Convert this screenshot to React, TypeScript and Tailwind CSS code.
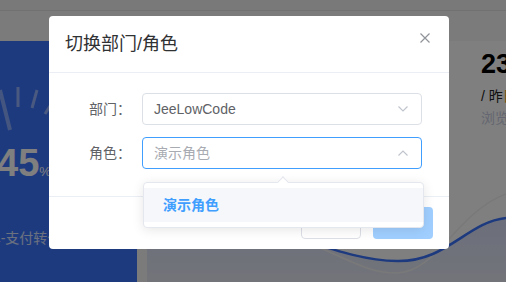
const ChevronDown = () => (
  <svg width="10" height="6" viewBox="0 0 10 6" fill="none">
    <path d="M0.5 0.5 L5 5 L9.5 0.5" stroke="#c0c4cc" strokeWidth="1.2" />
  </svg>
);

const ChevronUp = () => (
  <svg width="10" height="6" viewBox="0 0 10 6" fill="none">
    <path d="M0.5 5.5 L5 1 L9.5 5.5" stroke="#c0c4cc" strokeWidth="1.2" />
  </svg>
);

const App = () => {
  return (
    <div className="relative h-[282px] w-[506px] overflow-hidden bg-[#f6f6f6] font-['Liberation_Sans','Noto_Sans_CJK_SC',sans-serif]">
      {/* page behind the mask */}
      <div className="h-[11px] border-b border-[#e2e2e2] bg-[#f2f2f2]" />
      <div className="flex h-[271px] gap-[10px] pt-[30px]">
        <div className="-ml-[89px] flex w-[226px] shrink-0 flex-col items-center bg-[#3a74ff]">
          <svg width="226" height="100" viewBox="0 0 226 100">
            <line x1="89" y1="49" x2="99" y2="89" stroke="white" strokeOpacity="0.4" strokeWidth="4" />
            <line x1="107" y1="46" x2="107" y2="66" stroke="white" strokeOpacity="0.45" strokeWidth="3" />
            <line x1="126" y1="49" x2="121" y2="67" stroke="white" strokeOpacity="0.45" strokeWidth="3" />
            <line x1="139" y1="65" x2="134" y2="73" stroke="white" strokeOpacity="0.45" strokeWidth="3" />
          </svg>
          <div className="mt-[2px] flex items-baseline text-white">
            <span className="text-[38px] font-bold leading-[40px]">45</span>
            <span className="text-[13px]">%</span>
          </div>
          <div className="mt-[45px] whitespace-nowrap text-[14px] text-white/80">下单-支付转化率</div>
        </div>
        <div className="flex flex-1 flex-col bg-white">
          <div className="whitespace-nowrap pl-[334px] pt-[8px]">
            <div className="text-[27px] font-bold leading-[30px] text-black">23</div>
            <div className="mt-[8px] text-[14px] leading-[18px] text-[#222]">
              / 昨<span className="text-[#f5a623]">日</span>
            </div>
            <div className="mt-[4px] text-[14px] leading-[18px] text-[#c8cde2]">浏览</div>
          </div>
          <svg className="mt-auto" width="359" height="100" viewBox="0 0 359 100">
            <defs>
              <linearGradient id="area" x1="0" y1="0" x2="0" y2="1">
                <stop offset="0" stopColor="#d6ddf8" />
                <stop offset="1" stopColor="#e6e9f4" />
              </linearGradient>
            </defs>
            <path d="M0 30 C120 30 180 78 250 79 C300 80 320 40 359 36 L359 100 L0 100 Z" fill="url(#area)" />
            <path d="M100 40 C180 60 210 92 250 91 C290 90 310 30 359 12" fill="none" stroke="#f2f2f2" strokeWidth="1.5" />
            <path d="M0 30 C120 30 180 78 250 79 C300 80 320 40 359 36" fill="none" stroke="#3a74ff" strokeWidth="2.5" />
          </svg>
        </div>
      </div>

      {/* mask */}
      <div className="absolute inset-0 bg-black/50" />

      {/* dialog */}
      <div className="absolute left-[49px] top-[16px] flex h-[233px] w-[400px] flex-col rounded-[4px] bg-white">
        <div className="flex h-[57px] shrink-0 items-center justify-between border-b border-[#ebeef5] pl-4 pr-[19px]">
          <span className="text-[18px] leading-[24px] text-[#303133]">切换部门/角色</span>
          <svg className="mb-[13px]" width="10" height="10" viewBox="0 0 10 10">
            <path d="M0.5 0.5 L9.5 9.5 M9.5 0.5 L0.5 9.5" stroke="#909399" strokeWidth="1.2" />
          </svg>
        </div>

        <div className="pb-[27px] pt-[20px]">
          <div className="flex items-center">
            <div className="w-[93px] pr-[11px] text-right text-[14px] text-[#606266]">部门：</div>
            <div className="flex h-[32px] w-[280px] items-center justify-between rounded-[4px] border border-[#dcdfe6] pl-[11px] pr-[13px]">
              <span className="text-[14px] text-[#606266]">JeeLowCode</span>
              <ChevronDown />
            </div>
          </div>

          <div className="relative mt-[12px] flex items-center">
            <div className="w-[93px] pr-[11px] text-right text-[14px] text-[#606266]">角色：</div>
            <div className="flex h-[32px] w-[280px] items-center justify-between rounded-[4px] border border-[#409eff] pl-[11px] pr-[13px]">
              <span className="text-[14px] text-[#a8abb2]">演示角色</span>
              <ChevronUp />
            </div>

            <div className="absolute left-[94px] top-[45px] z-10 w-[281px] rounded-[4px] border border-[#e4e7ed] bg-white py-[5px] shadow-[0_2px_12px_0_rgba(0,0,0,0.1)]">
              <div className="absolute -top-[5px] left-[135px] h-[8px] w-[8px] rotate-45 border-l border-t border-[#e4e7ed] bg-white" />
              <div className="flex h-[34px] items-center bg-[#f5f7fa] pl-[19px] text-[14px] font-bold text-[#409eff]">
                演示角色
              </div>
            </div>
          </div>
        </div>

        <div className="flex justify-end gap-[12px] border-t border-[#ebeef5] pr-[16px] pt-[10px]">
          <button className="h-[32px] w-[60px] rounded-[4px] border border-[#dcdfe6] bg-white pb-[12px] text-[14px] leading-[18px] text-[#606266]">
            取消
          </button>
          <button className="h-[32px] w-[60px] rounded-[4px] bg-[#a0cfff] pb-[12px] text-[14px] leading-[18px] text-white">
            确定
          </button>
        </div>
      </div>
    </div>
  );
};

export default App;
